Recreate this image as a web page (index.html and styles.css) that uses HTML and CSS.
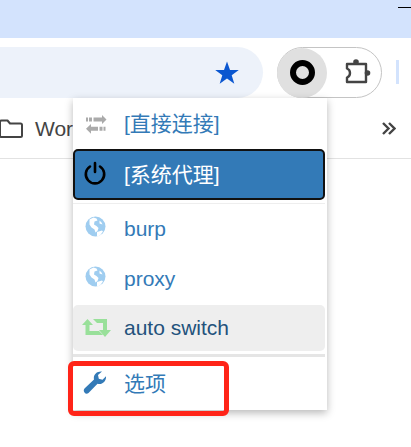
FILE: index.html
```html
<!DOCTYPE html>
<html>
<head lang="zh">
    <meta charset="UTF-8">
    <title>Proxy menu</title>
    <link rel="stylesheet" href="styles.css">
</head>
<body>
    <div id="browser">
        <div class="titlebar"><span class="minimize"></span></div>
        <div class="toolbar">
            <div class="address">
                <svg class="star" width="26" height="26" viewBox="0 0 26 26"><path fill="#0b57d0" d="M13 1.500l3 8.400h8.800l-7.100 5.300 2.600 8.600-7.300-5.200-7.300 5.200 2.600-8.600-7.100-5.300H10z"/></svg>
            </div>
            <div class="pill">
                <span class="pill-active"><span class="ring"></span></span>
                <svg class="puzzle" width="28" height="28" viewBox="0 0 28 28">
                    <path fill="none" stroke="#444" stroke-width="2.400" stroke-linejoin="round" d="M2 5H21V23H2V18.500C6 17 6 11 2 9.500z"/>
                    <circle cx="11" cy="3" r="2.800" fill="#444"/>
                    <circle cx="22.500" cy="14" r="2.800" fill="#444"/>
                </svg>
            </div>
            <span class="profile-edge"></span>
        </div>
        <div class="bookmarks">
            <svg class="folder" width="24" height="20" viewBox="0 0 24 20"><path fill="none" stroke="#444" stroke-width="2" stroke-linejoin="round" d="M1 3c0-1 .5-1.500 1.500-1.500h6l2.500 3h10.500c1 0 1.500.5 1.500 1.500v10.500c0 1-.5 1.500-1.500 1.500h-19c-1 0-1.500-.5-1.500-1.500z"/></svg>
            <span class="bookmark-name">Wor</span>
            <svg class="more" width="14" height="13" viewBox="0 0 14 13"><path fill="none" stroke="#444" stroke-width="2.400" d="M1 1l5.500 5.500L1 12M7 1l5.500 5.500L7 12"/></svg>
        </div>
    </div>

    <ul id="menu">
        <li class="item first">
            <svg class="icon" width="24" height="24" viewBox="0 0 24 24"><path fill="#aaa" d="M3 7.500h2v4H3zM6 7.500h3v4H6zM10.500 7.500H19V5l4.500 4.500L19 14v-2.500h-8.500zM8 14v2.700h7v4H8v3l-5-5zM16.500 16.700h3v4h-3zM20.500 16.700h2v4h-2z"/></svg>
            <span class="label cjk">[直接连接]</span>
        </li>
        <li class="item selected">
            <svg class="icon" width="24" height="24" viewBox="0 0 24 24"><path fill="none" stroke="#000" stroke-width="2.600" stroke-linecap="round" d="M7 5.500a9.200 9.200 0 1 0 10 0M12 2v9"/></svg>
            <span class="label cjk">[系统代理]</span>
        </li>
        <li class="divider thin"></li>
        <li class="item">
            <svg class="icon" width="24" height="24" viewBox="0 0 24 24"><circle cx="12.500" cy="11.500" r="10" fill="#9fcdf0"/><path fill="#fff" d="M6.500 4.500l4-2 3 1 1 2-3 1-.5 3 2.500 1.500 2 2-1 3-2 1.500-1-3-3-2-2-3zM14 17l5-1.500 1 1-3 4-3 1zM16.500 5.500l2 2 1 2-3-1z"/></svg>
            <span class="label">burp</span>
        </li>
        <li class="item">
            <svg class="icon" width="24" height="24" viewBox="0 0 24 24"><circle cx="12.500" cy="11.500" r="10" fill="#9fcdf0"/><path fill="#fff" d="M6.500 4.500l4-2 3 1 1 2-3 1-.5 3 2.500 1.500 2 2-1 3-2 1.500-1-3-3-2-2-3zM14 17l5-1.500 1 1-3 4-3 1zM16.500 5.500l2 2 1 2-3-1z"/></svg>
            <span class="label">proxy</span>
        </li>
        <li class="item hover">
            <svg class="icon wide" width="32" height="24" viewBox="0 0 32 24"><path fill="#99e09a" d="M7.500 2L13 8H9.500V14H19L23 18H5.500V8H2zM13 2H27V13H31L25 20 19 13H23V6H17z"/></svg>
            <span class="label">auto switch</span>
        </li>
        <li class="divider"></li>
        <li class="item last">
            <svg class="icon" width="24" height="24" viewBox="0 0 24 24"><path fill="#337ab7" d="M1.500 18.500L11 9.500C10 5 13.500 1 19 1.500l-4 3.500.8 3.800 3.700 1 3.500-3.500c.5 5-4 9-8.500 7.500L5.500 23c-1.500 1.200-3 .8-4-.5-1-1.200-1-2.800 0-4z"/></svg>
            <span class="label cjk">选项</span>
        </li>
    </ul>

    <div class="highlight"></div>
</body>
</html>
```

FILE: styles.css
```css
*{
    margin: 0;
    padding: 0;
    box-sizing: border-box;
}
ul{
    list-style: none;
}
html,body{
    width: 411px;
    height: 447px;
    overflow: hidden;
    background: #fff;
}
body{
    font-family: "Liberation Sans", "Noto Sans CJK SC", sans-serif;
}
.titlebar{
    height: 38px;
    background: #d3e3fd;
    display: flex;
    justify-content: flex-end;
    padding-top: 7px;
}
.minimize{
    width: 13px;
    height: 1px;
    background: #000;
}
.toolbar{
    height: 60px;
    display: flex;
    align-items: flex-start;
    padding-top: 9px;
}
.address{
    width: 263px;
    height: 51px;
    background: #edf2fa;
    border-radius: 0 26px 26px 0;
    display: flex;
    justify-content: flex-end;
    align-items: center;
    padding-right: 23px;
}
.pill{
    width: 105px;
    height: 51px;
    margin-left: 14px;
    border: 1px solid #c4c4c4;
    border-radius: 26px;
    display: flex;
    align-items: center;
}
.pill-active{
    width: 50px;
    height: 50px;
    margin-left: -1px;
    border-radius: 50%;
    background: #e0e0e0;
    display: flex;
    align-items: center;
    justify-content: center;
}
.ring{
    width: 25px;
    height: 25px;
    border: 6px solid #000;
    border-radius: 50%;
}
.puzzle{
    margin-left: 18px;
}
.profile-edge{
    width: 3px;
    height: 24px;
    margin: 13px 0 0 14px;
    background: #d3e3fd;
}
.bookmarks{
    height: 61px;
    border-bottom: 1px solid #e2e2e2;
    display: flex;
    align-items: center;
    padding-top: 2px;
    font-size: 21px;
    color: #444;
}
.folder{
    margin-left: -1px;
}
.bookmark-name{
    margin-left: 12px;
}
.more{
    margin-left: auto;
    margin-right: 15px;
    margin-top: -2px;
}
#menu{
    position: absolute;
    left: 73px;
    top: 98px;
    width: 254px;
    height: 312px;
    background: #fff;
    box-shadow: 0 3px 8px rgba(0,0,0,.28);
    padding-right: 2px;
    font-size: 21px;
    color: #337ab7;
}
.item{
    height: 50px;
    display: flex;
    align-items: center;
    padding-left: 10px;
    border-radius: 5px;
}
.icon{
    flex: none;
    margin-top: -4px;
}
.label{
    margin-left: 17px;
    margin-top: -1px;
}
.cjk{
    margin-top: -3px;
}
.wide{
    margin-top: 2px;
    margin-left: -3px;
    margin-right: -5px;
}
.first{
    height: 51px;
}
.selected{
    height: 51px;
    margin-bottom: 3px;
    background: #337ab7;
    border: 2px solid #111;
    padding-left: 8px;
    color: #fff;
}
.hover{
    height: 46px;
    margin-top: 1px;
    background: #eee;
    color: #23527c;
}
.divider{
    height: 3px;
    margin-top: 3px;
    background: #e5e5e5;
}
.thin{
    height: 1px;
    margin-top: 0;
    background: #eee;
}
.last{
    height: 53px;
}
.highlight{
    position: absolute;
    left: 68px;
    top: 361px;
    width: 161px;
    height: 55px;
    border: 5px solid #ff2418;
    border-radius: 6px;
}
```
